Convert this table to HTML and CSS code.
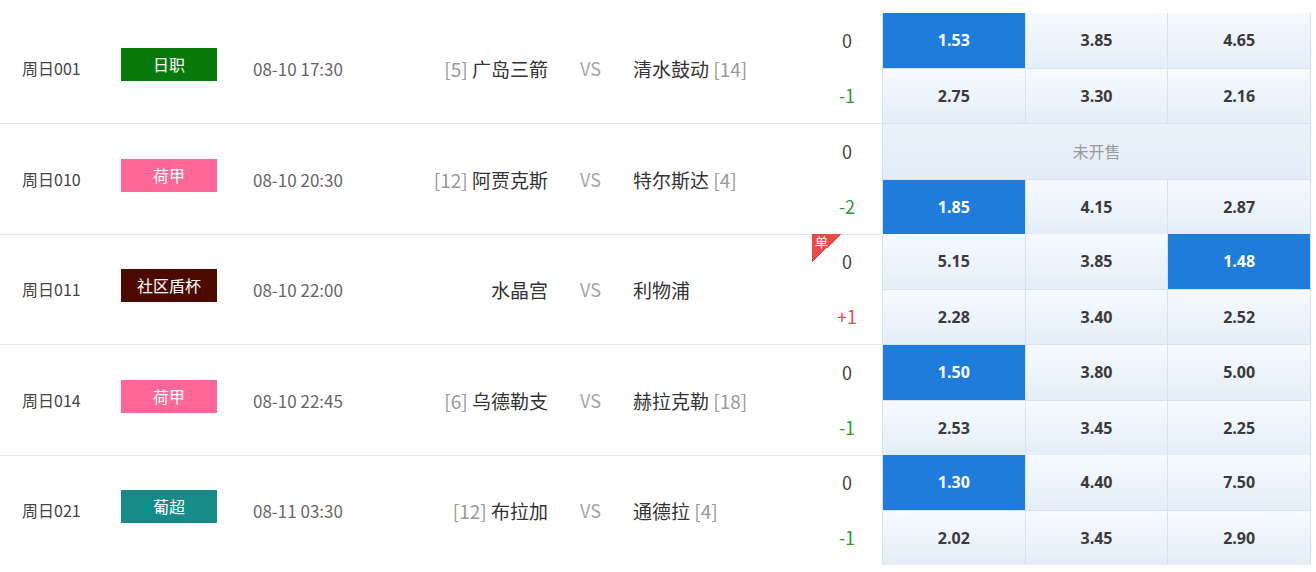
FILE: index.html
```html
<!DOCTYPE html>
<html lang="zh-CN">
<head>
    <meta charset="UTF-8">
    <meta name="viewport" content="width=device-width, initial-scale=1.0">
    <title>竞彩足球</title>
    <link rel="stylesheet" href="styles.css">
</head>
<body>

    <div class="match-list">
        <!-- 周日001 -->
        <div class="match">
            <div class="cell num">周日001</div>
            <div class="cell league"><span class="badge jleague">日职</span></div>
            <div class="cell time">08-10 17:30</div>
            <div class="cell home"><span><span class="rank">[5]</span> 广岛三箭</span></div>
            <div class="cell vs">VS</div>
            <div class="cell away"><span>清水鼓动 <span class="rank">[14]</span></span></div>
            <div class="cell handicap">
                <span>0</span>
                <span class="minus">-1</span>
            </div>
            <div class="odds">
                <div class="odd on">1.53</div>
                <div class="odd">3.85</div>
                <div class="odd">4.65</div>
                <div class="odd">2.75</div>
                <div class="odd">3.30</div>
                <div class="odd">2.16</div>
            </div>
        </div>

        <!-- 周日010 -->
        <div class="match">
            <div class="cell num">周日010</div>
            <div class="cell league"><span class="badge eredivisie">荷甲</span></div>
            <div class="cell time">08-10 20:30</div>
            <div class="cell home"><span><span class="rank">[12]</span> 阿贾克斯</span></div>
            <div class="cell vs">VS</div>
            <div class="cell away"><span>特尔斯达 <span class="rank">[4]</span></span></div>
            <div class="cell handicap">
                <span>0</span>
                <span class="minus">-2</span>
            </div>
            <div class="odds">
                <div class="odd closed">未开售</div>
                <div class="odd on">1.85</div>
                <div class="odd">4.15</div>
                <div class="odd">2.87</div>
            </div>
        </div>

        <!-- 周日011 -->
        <div class="match">
            <div class="cell num">周日011</div>
            <div class="cell league"><span class="badge shield">社区盾杯</span></div>
            <div class="cell time">08-10 22:00</div>
            <div class="cell home"><span>水晶宫</span></div>
            <div class="cell vs">VS</div>
            <div class="cell away"><span>利物浦</span></div>
            <div class="cell handicap">
                <span class="single">单</span>
                <span>0</span>
                <span class="plus">+1</span>
            </div>
            <div class="odds">
                <div class="odd">5.15</div>
                <div class="odd">3.85</div>
                <div class="odd on">1.48</div>
                <div class="odd">2.28</div>
                <div class="odd">3.40</div>
                <div class="odd">2.52</div>
            </div>
        </div>

        <!-- 周日014 -->
        <div class="match">
            <div class="cell num">周日014</div>
            <div class="cell league"><span class="badge eredivisie">荷甲</span></div>
            <div class="cell time">08-10 22:45</div>
            <div class="cell home"><span><span class="rank">[6]</span> 乌德勒支</span></div>
            <div class="cell vs">VS</div>
            <div class="cell away"><span>赫拉克勒 <span class="rank">[18]</span></span></div>
            <div class="cell handicap">
                <span>0</span>
                <span class="minus">-1</span>
            </div>
            <div class="odds">
                <div class="odd on">1.50</div>
                <div class="odd">3.80</div>
                <div class="odd">5.00</div>
                <div class="odd">2.53</div>
                <div class="odd">3.45</div>
                <div class="odd">2.25</div>
            </div>
        </div>

        <!-- 周日021 -->
        <div class="match">
            <div class="cell num">周日021</div>
            <div class="cell league"><span class="badge liga">葡超</span></div>
            <div class="cell time">08-11 03:30</div>
            <div class="cell home"><span><span class="rank">[12]</span> 布拉加</span></div>
            <div class="cell vs">VS</div>
            <div class="cell away"><span>通德拉 <span class="rank">[4]</span></span></div>
            <div class="cell handicap">
                <span>0</span>
                <span class="minus">-1</span>
            </div>
            <div class="odds">
                <div class="odd on">1.30</div>
                <div class="odd">4.40</div>
                <div class="odd">7.50</div>
                <div class="odd">2.02</div>
                <div class="odd">3.45</div>
                <div class="odd">2.90</div>
            </div>
        </div>
    </div>

</body>
</html>
```

FILE: styles.css
```css
body {
    margin: 0;
    padding: 13px 0 0;
    background: #fff;
    font-family: "Noto Sans CJK SC", "Noto Sans", sans-serif;
    color: #333;
}
.match-list {
    width: 1311px;
}
.match {
    display: grid;
    grid-template-columns: 121px 132px 150px 145px 85px 179px 70px 429px;
    grid-template-rows: 1fr;
    height: 110px;
}
.match:nth-child(odd) {
    height: 111px;
}
.match:last-child {
    height: 110px;
}
.cell {
    display: flex;
    align-items: center;
    box-sizing: border-box;
    border-bottom: 1px solid #e9e9e9;
    white-space: nowrap;
}
.num {
    padding-left: 22px;
    font-size: 16px;
    color: #444;
}
.badge {
    display: block;
    width: 96px;
    height: 33px;
    line-height: 33px;
    margin-bottom: 8px;
    text-align: center;
    font-size: 16px;
    color: #fff;
}
.jleague {
    background: #087a0b;
}
.eredivisie {
    background: #ff6799;
}
.shield {
    background: #4c0a03;
}
.liga {
    background: #178b87;
}
.time {
    font-size: 17px;
    color: #666;
}
.home,
.away {
    font-size: 19px;
    color: #333;
}
.home {
    justify-content: flex-end;
}
.away {
    justify-content: flex-start;
}
.rank {
    color: #999;
}
.vs {
    justify-content: center;
    font-size: 18px;
    color: #a5a5a5;
}
.handicap {
    position: relative;
    flex-direction: column;
    justify-content: center;
    align-items: stretch;
    font-size: 18px;
    color: #444;
}
.handicap span {
    height: 55px;
    line-height: 55px;
    text-align: center;
}
.handicap .minus {
    color: #2f9a2f;
}
.handicap .plus {
    color: #e8474b;
}
.handicap .single {
    position: absolute;
    top: 0;
    left: 0;
    width: 30px;
    height: 28px;
    line-height: 16px;
    padding-left: 3px;
    box-sizing: border-box;
    text-align: left;
    font-size: 13px;
    color: #fff;
    background: linear-gradient(to bottom right, #e84a4a 50%, transparent 50%);
}
.odds {
    display: grid;
    grid-template-columns: repeat(3, 1fr);
    grid-template-rows: 1fr 1fr;
    border-left: 1px solid #d6e2ed;
}
.odd {
    display: flex;
    align-items: center;
    justify-content: center;
    box-sizing: border-box;
    border-right: 1px solid #d6e2ed;
    border-bottom: 1px solid #d6e2ed;
    background: linear-gradient(to bottom, #f7fafe 0%, #e4eef8 100%);
    font-family: "Open Sans", "Noto Sans CJK SC", sans-serif;
    font-weight: bold;
    font-size: 16px;
    color: #3a3a3a;
}
.odd.on {
    background: #1f7cda;
    color: #fff;
}
.odd.closed {
    grid-column: span 3;
    background: linear-gradient(to bottom, #eaf2fb 0%, #e3edf7 100%);
    font-family: "Noto Sans CJK SC", sans-serif;
    font-weight: normal;
    color: #999;
}
```
